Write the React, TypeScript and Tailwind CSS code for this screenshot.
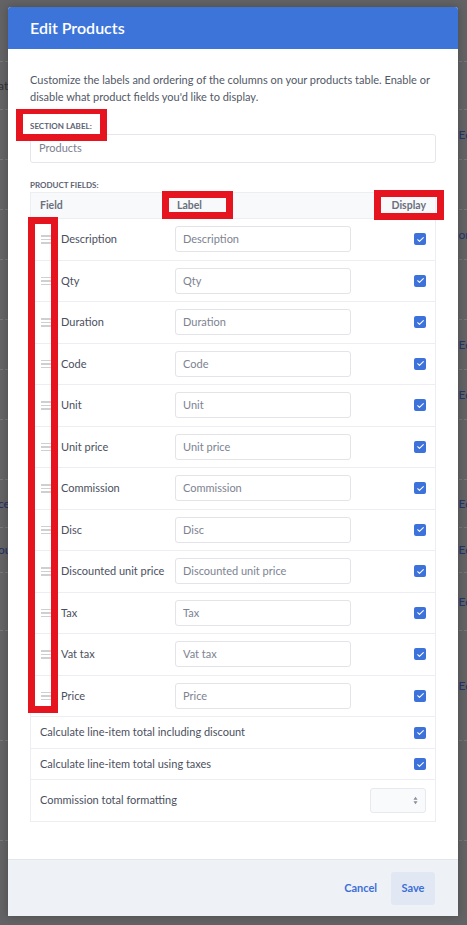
import React from "react";

const fields = [
  "Description",
  "Qty",
  "Duration",
  "Code",
  "Unit",
  "Unit price",
  "Commission",
  "Disc",
  "Discounted unit price",
  "Tax",
  "Vat tax",
  "Price",
];

function Check() {
  return (
    <span className="flex h-[12px] w-[12px] items-center justify-center rounded-[2px] bg-[#3c72da]">
      <svg viewBox="0 0 12 12" className="h-[9px] w-[9px]" fill="none">
        <path d="M2.2 6.3l2.4 2.3 5.2-5.2" stroke="#fff" strokeWidth="1.4" strokeLinecap="round" strokeLinejoin="round" />
      </svg>
    </span>
  );
}

function Handle() {
  return (
    <span className="flex w-[10px] flex-col gap-[2px]">
      <span className="h-[1.5px] bg-[#cfcfcf]" />
      <span className="h-[1.5px] bg-[#cfcfcf]" />
      <span className="h-[1.5px] bg-[#cfcfcf]" />
    </span>
  );
}

// faded page behind the overlay
const bgRows: { h: number; left?: string; right?: string; leftBlue?: boolean }[] = [
  { h: 62 },
  { h: 48, left: "ate" },
  { h: 50, right: "Ed" },
  { h: 50 },
  { h: 50, right: "on" },
  { h: 60 },
  { h: 50, right: "Ed" },
  { h: 50, right: "Ed" },
  { h: 60 },
  { h: 48, left: "ce", leftBlue: true, right: "Ed" },
  { h: 45, left: "ou", leftBlue: true, right: "Ed" },
  { h: 58, right: "Ed" },
  { h: 110, right: "Ed" },
  { h: 100 },
];

export default function App() {
  return (
    <div className="relative h-[925px] w-[467px] overflow-hidden bg-[#636365] font-['Lato','Liberation_Sans',sans-serif]">
      {/* background page */}
      <div className="flex flex-col">
        {bgRows.map((r, i) => (
          <div
            key={i}
            style={{ height: r.h }}
            className="flex items-center justify-between border-b border-dashed border-[#777779] text-[12px]"
          >
            <span className={r.leftBlue ? "-ml-[2px] text-[#1f2f63]" : "-ml-[2px] text-[#333335]"}>{r.left}</span>
            <span className="-mr-[5px] text-[#22356c]">{r.right}</span>
          </div>
        ))}
      </div>

      {/* modal */}
      <div className="absolute left-[8px] top-[7px] flex h-[909px] w-[450px] flex-col overflow-hidden rounded-t-[3px] bg-white shadow-[0_0_8px_rgba(0,0,0,0.25)]">
        <div className="flex h-[42px] shrink-0 items-center bg-[#3c74da] px-[22px]">
          <h1 className="text-[16px] font-semibold text-white">Edit Products</h1>
        </div>

        <div className="flex flex-1 flex-col px-[22px] pt-[22px]">
          <p className="text-[11px] leading-[17px] text-[#525866]">
            Customize the labels and ordering of the columns on your products table. Enable or disable what product fields you'd like to display.
          </p>

          <div className="mt-[16px] text-[8px] font-bold uppercase leading-[10px] text-[#5d6373]">Section label:</div>
          <div className="mt-[3px] flex h-[29px] items-center rounded-[3px] border border-[#e4e6ea] px-[8px] text-[11px] text-[#7b8190]">
            Products
          </div>

          <div className="mt-[17px] text-[8px] font-bold uppercase leading-[10px] text-[#5d6373]">Product fields:</div>

          <div className="mt-[2px] border border-[#eceef1]">
            <div className="flex h-[25px] items-center bg-[#f8f9fb] text-[10.5px] font-bold text-[#6a6f7d]">
              <span className="w-[145px] pl-[9px]">Field</span>
              <span className="flex-1 pl-[1px]">Label</span>
              <span className="pr-[9px]">Display</span>
            </div>
            {fields.map((f) => (
              <div key={f} className="flex h-[41.5px] items-center border-t border-[#eceef1] text-[11px]">
                <span className="flex w-[30px] justify-end pr-[10px]">
                  <Handle />
                </span>
                <span className="w-[114px] text-[#4b5060]">{f}</span>
                <span className="flex h-[26px] w-[176px] items-center rounded-[3px] border border-[#e2e4e8] px-[7px] text-[#7d8391]">
                  {f}
                </span>
                <span className="ml-auto pr-[9px]">
                  <Check />
                </span>
              </div>
            ))}
            <div className="flex h-[32px] items-center justify-between border-t border-[#eceef1] pl-[9px] pr-[9px] text-[11px] text-[#4b5060]">
              <span>Calculate line-item total including discount</span>
              <Check />
            </div>
            <div className="flex h-[31px] items-center justify-between border-t border-[#eceef1] pl-[9px] pr-[9px] text-[11px] text-[#4b5060]">
              <span>Calculate line-item total using taxes</span>
              <Check />
            </div>
            <div className="flex h-[42px] items-center justify-between border-t border-[#eceef1] pl-[9px] pr-[9px] text-[11px] text-[#4b5060]">
              <span>Commission total formatting</span>
              <span className="flex h-[25px] w-[56px] items-center justify-end rounded-[3px] border border-[#e6e9ee] bg-[#f8fafc] pr-[7px]">
                <svg viewBox="0 0 6 10" className="h-[9px] w-[5px]">
                  <path d="M3 0.5L5.5 4H0.5z" fill="#8a8f9a" />
                  <path d="M3 9.5L0.5 6h5z" fill="#8a8f9a" />
                </svg>
              </span>
            </div>
          </div>
        </div>

        <div className="flex h-[57px] shrink-0 items-center justify-end gap-[14px] border-t border-[#e3e7ec] bg-[#eef2f6] pr-[23px]">
          <button className="text-[11px] font-bold text-[#3c6fd6]">Cancel</button>
          <button className="h-[33px] w-[44px] rounded-[3px] bg-[#e2e8f3] text-[11px] font-bold text-[#3c6fd6]">Save</button>
        </div>
      </div>

      {/* red annotation boxes */}
      <div className="pointer-events-none absolute left-[16px] top-[109px] h-[32px] w-[91px] border-x-[7px] border-b-[7px] border-t-[5px] border-[#e5141e]" />
      <div className="pointer-events-none absolute left-[162px] top-[191px] h-[28px] w-[71px] border-[7px] border-[#e5141e]" />
      <div className="pointer-events-none absolute left-[374px] top-[190px] h-[30px] w-[70px] border-[7px] border-[#e5141e]" />
      <div className="pointer-events-none absolute left-[28px] top-[217px] h-[496px] w-[30px] border-[7px] border-[#e5141e]" />
    </div>
  );
}
